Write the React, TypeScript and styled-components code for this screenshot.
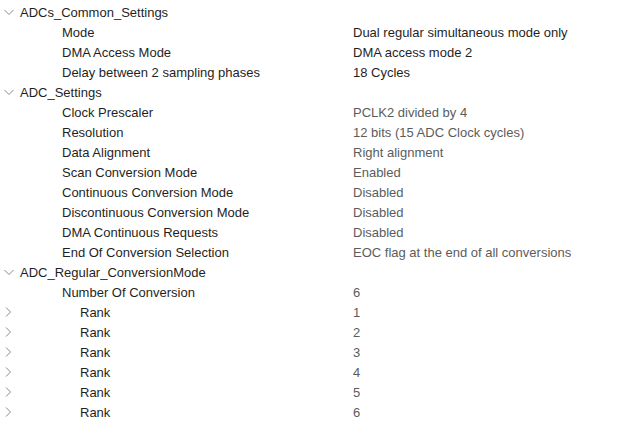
import { type FC } from "react";
import styled, { createGlobalStyle } from "styled-components";

const GlobalStyle = createGlobalStyle`
  html, body {
    margin: 0;
    padding: 0;
    background: #ffffff;
  }
  body {
    font-family: "Liberation Sans", Arial, sans-serif;
    font-size: 13px;
    overflow: hidden;
  }
`;

const Tree = styled.div`
  width: 644px;
  height: 428px;
  padding-top: 2px;
  box-sizing: border-box;
  overflow: hidden;
  background: #fff;
`;

const Row = styled.div`
  display: grid;
  grid-template-columns: 353px 1fr;
  height: 20px;
  align-items: center;
  position: relative;
  white-space: nowrap;
`;

const Label = styled.div<{ $indent: number }>`
  padding-left: ${(p) => p.$indent}px;
  padding-top: 1px;
  color: #1f1f1f;
  line-height: 19px;
`;

const Value = styled.div<{ $muted?: boolean }>`
  color: ${(p) => (p.$muted ? "#5c5c5c" : "#1f1f1f")};
  padding-top: 1px;
  line-height: 19px;
`;

const Twisty = styled.span`
  position: absolute;
  left: 3px;
  top: 4px;
  width: 12px;
  height: 12px;
  display: flex;
  align-items: center;
  justify-content: center;
`;

const Chevron: FC<{ open: boolean }> = ({ open }) => (
  <Twisty>
    <svg width="12" height="12" viewBox="0 0 12 12">
      {open ? (
        <path d="M1.5 4 L6 8.5 L10.5 4" fill="none" stroke="#8a8a8a" strokeWidth="1" />
      ) : (
        <path d="M3 1.5 L7.5 6 L3 10.5" fill="none" stroke="#8a8a8a" strokeWidth="1" />
      )}
    </svg>
  </Twisty>
);

type Item = {
  label: string;
  value?: string;
  level: 0 | 1 | 2;
  muted?: boolean;
  twisty?: "open" | "closed";
};

const items: Item[] = [
  { label: "ADCs_Common_Settings", level: 0, twisty: "open" },
  { label: "Mode", value: "Dual regular simultaneous mode only", level: 1 },
  { label: "DMA Access Mode", value: "DMA access mode 2", level: 1 },
  { label: "Delay between 2 sampling phases", value: "18 Cycles", level: 1 },
  { label: "ADC_Settings", level: 0, twisty: "open" },
  { label: "Clock Prescaler", value: "PCLK2 divided by 4", level: 1, muted: true },
  { label: "Resolution", value: "12 bits (15 ADC Clock cycles)", level: 1, muted: true },
  { label: "Data Alignment", value: "Right alignment", level: 1, muted: true },
  { label: "Scan Conversion Mode", value: "Enabled", level: 1, muted: true },
  { label: "Continuous Conversion Mode", value: "Disabled", level: 1, muted: true },
  { label: "Discontinuous Conversion Mode", value: "Disabled", level: 1, muted: true },
  { label: "DMA Continuous Requests", value: "Disabled", level: 1, muted: true },
  { label: "End Of Conversion Selection", value: "EOC flag at the end of all conversions", level: 1, muted: true },
  { label: "ADC_Regular_ConversionMode", level: 0, twisty: "open" },
  { label: "Number Of Conversion", value: "6", level: 1, muted: true },
  { label: "Rank", value: "1", level: 2, muted: true, twisty: "closed" },
  { label: "Rank", value: "2", level: 2, muted: true, twisty: "closed" },
  { label: "Rank", value: "3", level: 2, muted: true, twisty: "closed" },
  { label: "Rank", value: "4", level: 2, muted: true, twisty: "closed" },
  { label: "Rank", value: "5", level: 2, muted: true, twisty: "closed" },
  { label: "Rank", value: "6", level: 2, muted: true, twisty: "closed" },
  { label: "WatchDog", level: 0, twisty: "open" },
];

const indents = [20, 62, 80];

export default function App() {
  return (
    <>
      <GlobalStyle />
      <Tree>
        {items.map((it, i) => (
          <Row key={i}>
            {it.twisty && <Chevron open={it.twisty === "open"} />}
            <Label $indent={indents[it.level]}>{it.label}</Label>
            <Value $muted={it.muted}>{it.value ?? ""}</Value>
          </Row>
        ))}
      </Tree>
    </>
  );
}
